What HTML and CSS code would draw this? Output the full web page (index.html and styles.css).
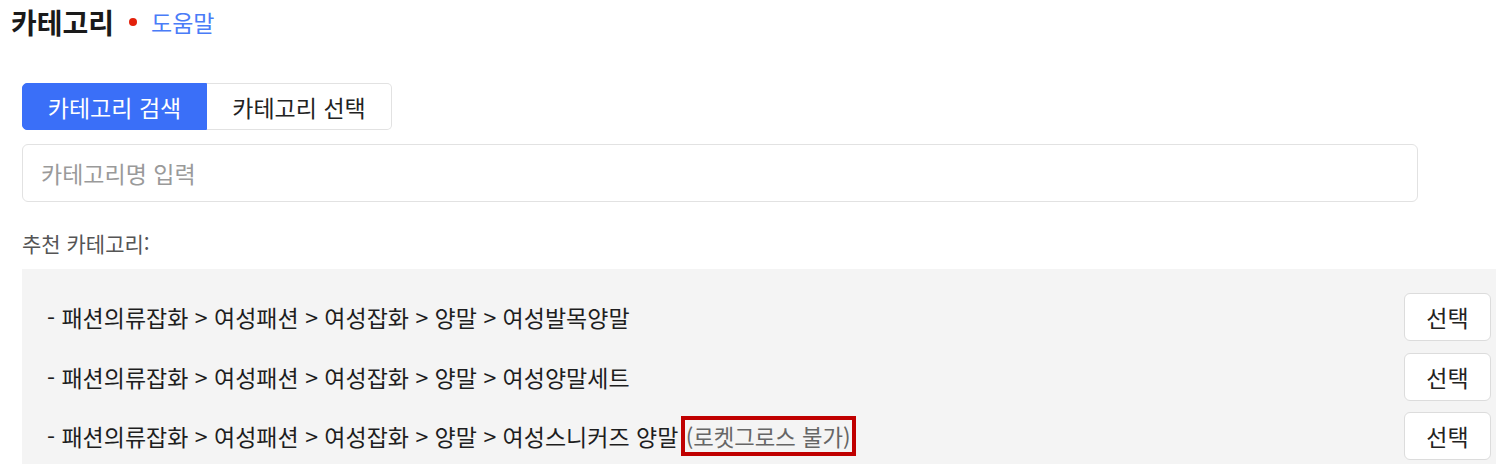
FILE: index.html
```html
<!DOCTYPE html>
<html lang="ko">
<head>
<meta charset="utf-8">
<link rel="stylesheet" href="styles.css">
</head>
<body>
<div class="page">
  <div class="title-row">
    <h2 class="title">카테고리</h2>
    <span class="required-dot"></span>
    <a class="help" href="#">도움말</a>
  </div>

  <div class="tabs">
    <button class="tab tab-active">카테고리 검색</button>
    <button class="tab">카테고리 선택</button>
  </div>

  <input class="search" type="text" placeholder="카테고리명 입력">

  <div class="rec-label">추천 카테고리:</div>

  <ul class="rec-list">
    <li class="rec-item">
      <span class="rec-path">- 패션의류잡화 &gt; 여성패션 &gt; 여성잡화 &gt; 양말 &gt; 여성발목양말</span>
      <button class="select-btn">선택</button>
    </li>
    <li class="rec-item">
      <span class="rec-path">- 패션의류잡화 &gt; 여성패션 &gt; 여성잡화 &gt; 양말 &gt; 여성양말세트</span>
      <button class="select-btn">선택</button>
    </li>
    <li class="rec-item">
      <span class="rec-path">- 패션의류잡화 &gt; 여성패션 &gt; 여성잡화 &gt; 양말 &gt; 여성스니커즈 양말 <span class="note">(로켓그로스 불가)</span></span>
      <button class="select-btn">선택</button>
    </li>
  </ul>
</div>
</body>
</html>
```

FILE: styles.css
```css
* { box-sizing: border-box; }

body {
  margin: 0;
  background: #fff;
  font-family: "Noto Sans CJK KR", "Noto Sans", sans-serif;
  color: #222;
}

.page {
  padding: 6px 6px 0 22px;
}

.title-row {
  display: flex;
  align-items: center;
  margin-left: -11px;
  height: 32px;
}

.title {
  margin: 0;
  font-size: 28px;
  font-weight: 700;
  color: #1a1a1a;
  line-height: 32px;
}

.required-dot {
  width: 8px;
  height: 8px;
  border-radius: 50%;
  background: #e3210b;
  margin: 0 14px 0 15px;
}

.help {
  font-size: 23px;
  color: #4a7cf7;
  text-decoration: none;
}

.tabs {
  display: flex;
  margin-top: 45px;
}

.tab {
  width: 185px;
  height: 47px;
  font-family: inherit;
  font-size: 23px;
  background: #fff;
  color: #222;
  border: 1px solid #e2e2e2;
  border-left: none;
  border-radius: 0 5px 5px 0;
  padding: 0;
}

.tab-active {
  background: #3a6ff8;
  color: #fff;
  border: 1px solid #3a6ff8;
  border-radius: 5px 0 0 5px;
}

.search {
  display: block;
  width: 1396px;
  height: 58px;
  margin-top: 14px;
  border: 1px solid #e2e2e2;
  border-radius: 6px;
  padding: 0 18px;
  font-family: inherit;
  font-size: 23px;
  color: #222;
  outline: none;
}

.search::placeholder { color: #9a9a9a; }

.rec-label {
  margin-top: 29px;
  font-size: 21px;
  color: #555;
  line-height: 24px;
}

.rec-list {
  list-style: none;
  margin: 14px 0 0;
  padding: 24px 5px 4px 25px;
  width: 1474px;
  height: 195px;
  background: #f4f4f4;
  display: flex;
  flex-direction: column;
  gap: 11.5px;
}

.rec-item {
  display: flex;
  align-items: center;
  justify-content: space-between;
  height: 48px;
}

.rec-path {
  font-size: 23px;
  color: #1e1e1e;
}

.note {
  font-size: 22.3px;
  color: #666;
  outline: 4px solid #c00000;
  padding: 0 1px;
}

.select-btn {
  width: 87px;
  height: 48px;
  background: #fff;
  border: 1px solid #dcdcdc;
  border-radius: 6px;
  font-family: inherit;
  font-size: 23px;
  color: #222;
  padding: 0;
}
```
